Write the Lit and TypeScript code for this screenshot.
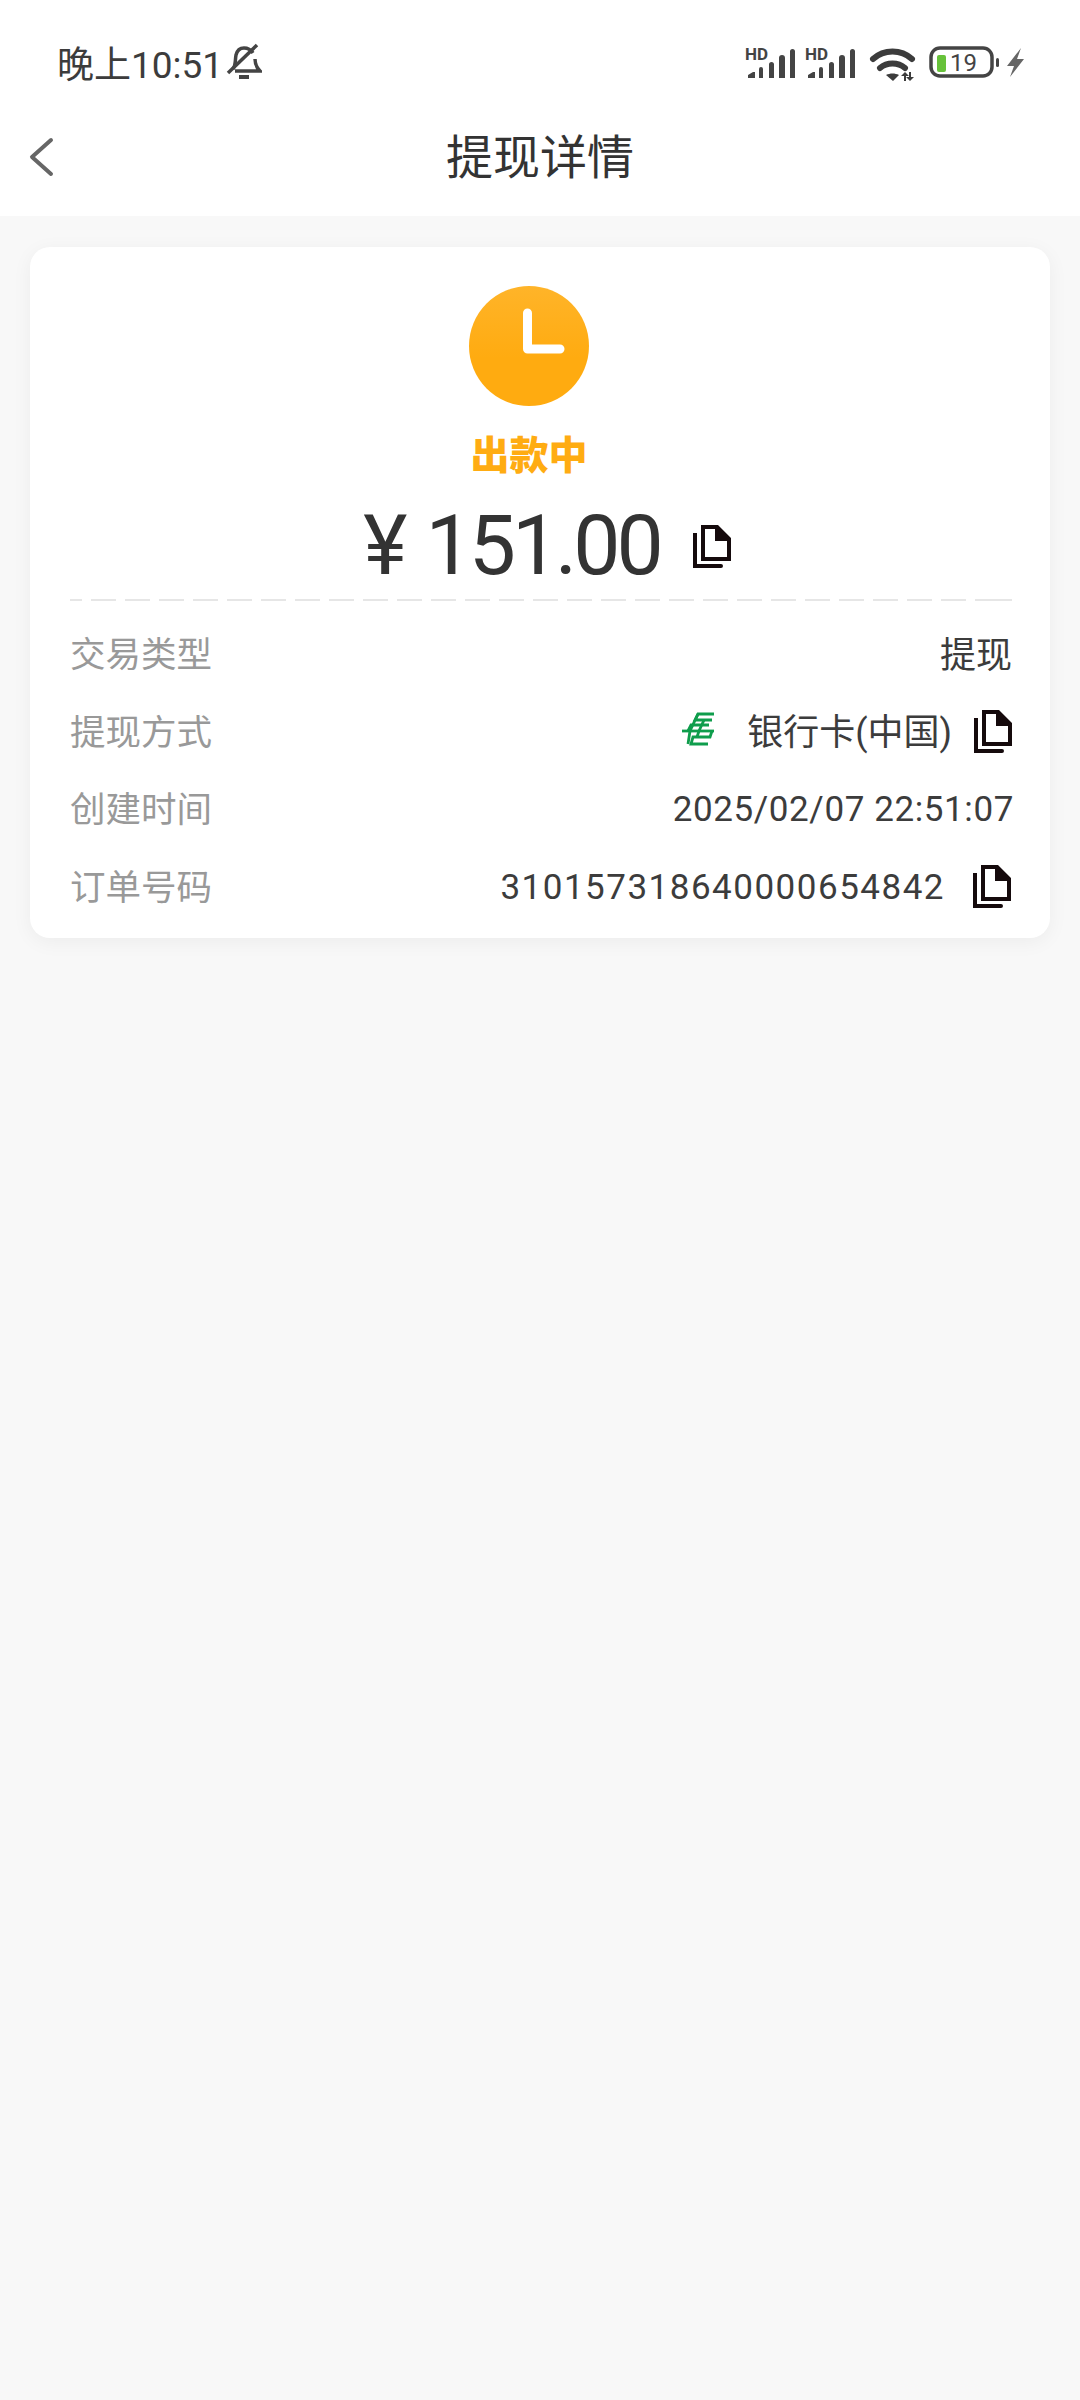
import { LitElement, html, css, svg } from 'lit';
import { customElement } from 'lit/decorators.js';

const copyIcon = html`<svg class="copy" viewBox="0 0 38 43" width="38" height="43">
  <path fill="#150a0c" fill-rule="evenodd" d="M8 0H25L38 13V36H8ZM12 4V32H34V16H22V4Z" />
  <path fill="#150a0c" d="M0 8H4V39H28a2 2 0 0 1 0 4H0Z" />
</svg>`;

const signal = (x: number) => svg`<g transform="translate(${x} 0)" fill="#444">
  <text x="0" y="18" font-family="Roboto, sans-serif" font-weight="700" font-size="17">HD</text>
  <path d="M3 36v-3l5-3h2v6ZM14 36V27a2 2 0 0 1 4 0v9ZM24 36V22.500a2.500 2.500 0 0 1 5 0V36ZM34 36V16a3 3 0 0 1 6 0v20ZM45 36V9.500a2.500 2.500 0 0 1 5 0V36Z" />
</g>`;

@customElement('app-root')
export class AppRoot extends LitElement {
  static styles = css`
    :host {
      display: block;
      width: 1080px;
      height: 2400px;
      background: #f8f8f8;
      font-family: Roboto, 'Noto Sans CJK SC', sans-serif;
      color: #333;
    }
    .top {
      background: #fff;
      height: 216px;
      display: flex;
      flex-direction: column;
    }
    .status {
      height: 108px;
      padding: 16px 50px 0 57px;
      box-sizing: border-box;
      display: flex;
      align-items: center;
      justify-content: space-between;
    }
    .clock {
      display: flex;
      align-items: center;
      gap: 3px;
      font-size: 37px;
      color: #3c3c3c;
    }
    .nav {
      flex: 1;
      position: relative;
      display: flex;
      align-items: center;
      justify-content: center;
      padding-bottom: 18px;
    }
    .nav h1 {
      margin: 0;
      font-size: 47px;
      font-weight: 400;
      color: #333;
    }
    .back {
      position: absolute;
      left: 28px;
      top: 29px;
    }
    .card {
      margin: 31px 30px 0;
      height: 691px;
      box-sizing: border-box;
      padding: 39px 38px 0 40px;
      background: #fff;
      border-radius: 20px;
      box-shadow: 0 4px 20px rgba(0, 0, 0, 0.05);
      display: flex;
      flex-direction: column;
      align-items: center;
    }
    .head {
      display: flex;
      flex-direction: column;
      align-items: center;
      margin-right: 24px;
    }
    .state {
      margin-top: 25px;
      color: #ffac12;
      font-size: 39px;
      line-height: 50px;
      font-weight: 900;
    }
    .amount {
      margin: 15px 0 0 12px;
      display: flex;
      align-items: center;
      font-size: 84px;
      line-height: 100px;
      color: #333;
    }
    .digits {
      letter-spacing: -4px;
    }
    .amount .copy {
      margin-left: 33px;
    }
    .yen {
      margin-right: 18px;
    }
    .dash {
      align-self: stretch;
      margin-top: 3px;
      height: 2px;
      background: repeating-linear-gradient(90deg, #e6e6e6 0 25px, transparent 25px 34px);
      background-position: -13px 0;
    }
    .rows {
      align-self: stretch;
      margin-top: 12px;
      display: flex;
      flex-direction: column;
    }
    .row {
      height: 77.500px;
      display: flex;
      align-items: center;
      justify-content: space-between;
      font-size: 36px;
      color: #3c3c3c;
    }
    .label {
      font-size: 35.500px;
      color: #999;
    }
    .value {
      display: flex;
      align-items: center;
    }
    .bank {
      margin-right: 32px;
    }
    .value .copy {
      margin: 5px 0 0 22px;
    }
    .date {
      font-size: 35px;
      letter-spacing: 0.600px;
      margin-right: -2px;
      padding-top: 6px;
    }
    .order {
      font-size: 35px;
      letter-spacing: 1.500px;
      margin-right: 6px;
      padding-top: 6px;
    }
    .order-value {
      margin-right: 1px;
    }
  `;

  render() {
    return html`
      <div class="top">
        <div class="status">
          <div class="clock">
            <span>晚上10:51</span>
            <svg width="36" height="38" viewBox="0 0 36 38" fill="none" stroke="#444" stroke-width="3.500">
              <path d="M7 26c3-4 2-9 3-14 1-4 4-7 8-7s7 2 9 5M29 16c0 4 1 8 5 12H9" />
              <path d="M2 30 31 2" />
              <path d="M13 34h10" stroke-width="4" />
            </svg>
          </div>
          <svg width="285" height="40" viewBox="0 0 285 40">
            ${signal(0)} ${signal(60)}
            <g fill="none" stroke="#3c3c3c" stroke-linecap="round">
              <path stroke-width="6" d="M128 17c11-10 28-10 39 0" />
              <path stroke-width="6" d="M135 26c7-6 18-6 25 0" />
            </g>
            <path fill="#3c3c3c" d="M141 33c4-2 9-2 13 0l-6 6Z" />
            <path fill="#3c3c3c" d="M160 30l4 4h-3v5h-2v-5h-3ZM165 39l-4-4h3v-5h2v5h3Z" />
            <rect x="186" y="6" width="61" height="28" rx="9" fill="none" stroke="#444" stroke-width="3.500" />
            <rect x="192" y="13" width="9" height="17" rx="2" fill="#67c23a" />
            <text x="205" y="29" font-family="Roboto, sans-serif" font-size="24" fill="#444">19</text>
            <rect x="251" y="16" width="3" height="9" rx="1.500" fill="#444" />
            <path fill="#666" d="M276 6 262 24h7l-4 11 14-18h-7Z" />
          </svg>
        </div>
        <div class="nav">
          <svg class="back" width="26" height="40" viewBox="0 0 26 40" fill="none" stroke="#666" stroke-width="4" stroke-linecap="round" stroke-linejoin="round">
            <path d="M23 3 4 20l19 17" />
          </svg>
          <h1>提现详情</h1>
        </div>
      </div>
      <div class="card">
        <div class="head">
          <svg width="120" height="120" viewBox="0 0 120 120">
            <defs>
              <linearGradient id="g" x1="0" y1="0" x2="0" y2="1">
                <stop offset="0" stop-color="#ffb429" />
                <stop offset="0.600" stop-color="#ffab10" />
              </linearGradient>
            </defs>
            <circle cx="60" cy="60" r="60" fill="url(#g)" />
            <path d="M58.500 27V63H91" fill="none" stroke="#fff" stroke-width="9" stroke-linecap="round" stroke-linejoin="round" />
          </svg>
          <div class="state">出款中</div>
        </div>
        <div class="amount"><span class="yen">¥</span><span class="digits">151.00</span>${copyIcon}</div>
        <div class="dash"></div>
        <div class="rows">
          <div class="row"><span class="label">交易类型</span><span class="value">提现</span></div>
          <div class="row">
            <span class="label">提现方式</span>
            <span class="value">
              <svg class="bank" width="34" height="34" viewBox="0 0 34 34" fill="none" stroke="#0f9d4c" stroke-width="2.800">
                <path d="M33 2H17L14 8H31" />
                <path d="M28 13H10L7 19" />
                <path d="M1 19H33" />
                <path d="M31 19 29 25H12L10 32H27" />
                <path d="M17 2 9 19 7 32M23 8 18 19 16 25" />
              </svg>
              银行卡(中国)${copyIcon}
            </span>
          </div>
          <div class="row"><span class="label">创建时间</span><span class="value date">2025/02/07 22:51:07</span></div>
          <div class="row">
            <span class="label">订单号码</span>
            <span class="value order-value"><span class="order">310157318640000654842</span>${copyIcon}</span>
          </div>
        </div>
      </div>
    `;
  }
}
